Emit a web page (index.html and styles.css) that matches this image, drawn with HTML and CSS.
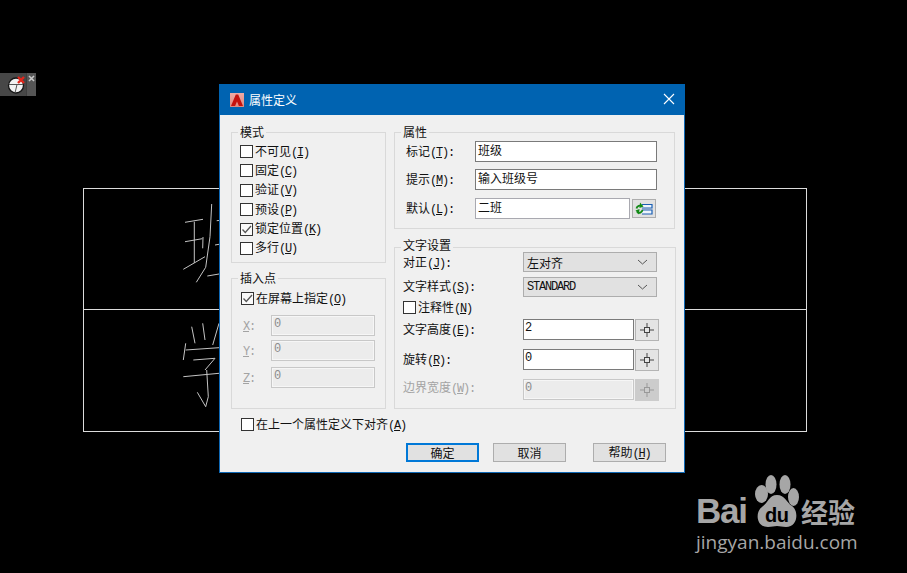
FILE: index.html
```html
<!DOCTYPE html>
<html lang="zh">
<head>
<meta charset="utf-8">
<title>属性定义</title>
<link rel="stylesheet" href="styles.css">
</head>
<body>
<main class="desktop">
  <svg class="drawing" width="907" height="573" viewBox="0 0 907 573">
    <g class="frame">
      <rect x="83.5" y="188.5" width="723" height="243"/>
      <path d="M83 309.5H806"/>
    </g>
    <g class="sketch">
      <path d="M185 222.3L203 219.3M185 241.7L202.3 238.7M194.3 221.7V263M183.3 269.3L205 256.7M211.7 204L210 236.7L205.7 267.3L196.3 282.3M202.7 248.3L203 237M216.7 220.7L219 220.5M215 245L219 244.3M207.3 276L219 274"/>
      <path d="M191.7 326.7L195 343.3M202.7 323.3L205 340M219 323.3L212.7 345M185.7 343.3L183.3 360M185.7 350L219 347.7M193.3 360L215 358.3L205 370M183.3 376.7L219 373.3M206.7 370L208.3 396.7L205.7 406.7L197.3 392.3"/>
    </g>
  </svg>

  <div class="snap-tool">
    <svg class="snap-icon" width="26" height="23" viewBox="0 0 26 23">
      <circle cx="16" cy="12.5" r="7.5" fill="#f2f2f2" stroke="#161616" stroke-width="1.3"/>
      <path d="M9 11.5H23M17 11.5L15 20" fill="none" stroke="#555" stroke-width="1"/>
      <path d="M18 4L24 10M24 4L18 10" stroke="#e3261b" stroke-width="2.4"/>
    </svg>
    <div class="snap-close"><svg width="7" height="7" viewBox="0 0 7 7"><path d="M1 1L6 6M6 1L1 6" stroke="#c8c8c8" stroke-width="1.6"/></svg></div>
  </div>

  <section class="dialog">
    <header class="titlebar">
      <svg class="app-icon" width="14" height="14" viewBox="0 0 14 14">
        <defs><linearGradient id="appbg" x1="0" y1="0" x2="0" y2="1"><stop offset="0" stop-color="#f0aaa4"/><stop offset="1" stop-color="#dc8880"/></linearGradient></defs>
        <rect width="14" height="14" fill="url(#appbg)"/>
        <path d="M1 13L5.8 1.5H8.2L13 13H8.9L7 8.6L5.1 13Z" fill="#c4120e"/>
      </svg>
      <h1 class="title">属性定义</h1>
      <svg class="close" width="12" height="12" viewBox="0 0 12 12"><path d="M1 1L11 11M11 1L1 11" stroke="#fff" stroke-width="1.1"/></svg>
    </header>

    <div class="body">
      <div class="columns">
        <div class="col-left">
          <div class="group group-mode">
            <span class="legend">模式</span>
            <div class="check-list">
              <div class="check"><span class="box"></span><span>不可见<span class="k">(<u>I</u>)</span></span></div>
              <div class="check"><span class="box"></span><span>固定<span class="k">(<u>C</u>)</span></span></div>
              <div class="check"><span class="box"></span><span>验证<span class="k">(<u>V</u>)</span></span></div>
              <div class="check"><span class="box"></span><span>预设<span class="k">(<u>P</u>)</span></span></div>
              <div class="check"><span class="box box-on"><svg width="11" height="11" viewBox="0 0 11 11"><path d="M1.5 5.5L4.3 8.5L10 2" fill="none" stroke="#555" stroke-width="1.3"/></svg></span><span>锁定位置<span class="k">(<u>K</u>)</span></span></div>
              <div class="check"><span class="box"></span><span>多行<span class="k">(<u>U</u>)</span></span></div>
            </div>
          </div>

          <div class="group group-point">
            <span class="legend">插入点</span>
            <div class="check"><span class="box box-on"><svg width="11" height="11" viewBox="0 0 11 11"><path d="M1.5 5.5L4.3 8.5L10 2" fill="none" stroke="#555" stroke-width="1.3"/></svg></span><span>在屏幕上指定<span class="k">(<u>O</u>)</span></span></div>
            <div class="coord coord-x"><span class="coord-label k"><u>X</u>:</span><div class="field field-off">0</div></div>
            <div class="coord coord-y"><span class="coord-label k"><u>Y</u>:</span><div class="field field-off">0</div></div>
            <div class="coord coord-z"><span class="coord-label k"><u>Z</u>:</span><div class="field field-off">0</div></div>
          </div>
        </div>

        <div class="col-right">
          <div class="group group-attr">
            <span class="legend">属性</span>
            <div class="attr-row"><span class="attr-label">标记<span class="k">(<u>T</u>):</span></span><div class="field field-wide">班级</div></div>
            <div class="attr-row attr-row-2"><span class="attr-label">提示<span class="k">(<u>M</u>):</span></span><div class="field field-wide">输入班级号</div></div>
            <div class="attr-row attr-row-3"><span class="attr-label">默认<span class="k">(<u>L</u>):</span></span><div class="field field-default">二班</div>
              <button class="field-btn" type="button" aria-label="插入字段">
                <svg width="18" height="14" viewBox="0 0 18 14">
                  <path d="M7 2.5H17V6H7M7 8H17V12H7" fill="#eef4fb" stroke="#1a5fb4" stroke-width="1.2"/>
                  <path d="M1.5 6.5A3.4 3.4 0 0 1 7 4.5M7.5 8A3.4 3.4 0 0 1 2 10" fill="none" stroke="#128a16" stroke-width="1.8"/>
                  <path d="M5 0.5L8.5 4.5L4.5 6ZM4 12.5L.5 8.5L4.5 7Z" fill="#128a16"/>
                </svg>
              </button>
            </div>
          </div>

          <div class="group group-text">
            <span class="legend legend-text">文字设置</span>
            <div class="text-row text-row-sel"><span class="text-label text-label-first">对正<span class="k">(<u>J</u>):</span></span>
              <div class="select"><span>左对齐</span><svg width="11" height="6" viewBox="0 0 11 6"><path d="M1 1L5.5 5L10 1" fill="none" stroke="#555" stroke-width="1"/></svg></div></div>
            <div class="text-row text-row-sel text-row-style"><span class="text-label">文字样式<span class="k">(<u>S</u>):</span></span>
              <div class="select"><span class="k">STANDARD</span><svg width="11" height="6" viewBox="0 0 11 6"><path d="M1 1L5.5 5L10 1" fill="none" stroke="#555" stroke-width="1"/></svg></div></div>
            <div class="check check-anno"><span class="box"></span><span>注释性<span class="k">(<u>N</u>)</span></span></div>
            <div class="text-row text-row-h"><span class="text-label">文字高度<span class="k">(<u>E</u>):</span></span><div class="field field-num k">2</div>
              <button class="pick" type="button" aria-label="拾取"><svg width="14" height="14" viewBox="0 0 14 14"><path d="M7 0V4.5M7 9.5V14M0 7H4.5M9.5 7H14" stroke="#444"/><rect x="4.5" y="4.5" width="5" height="5" fill="none" stroke="#444"/></svg></button></div>
            <div class="text-row text-row-n"><span class="text-label">旋转<span class="k">(<u>R</u>):</span></span><div class="field field-num k">0</div>
              <button class="pick" type="button" aria-label="拾取"><svg width="14" height="14" viewBox="0 0 14 14"><path d="M7 0V4.5M7 9.5V14M0 7H4.5M9.5 7H14" stroke="#444"/><rect x="4.5" y="4.5" width="5" height="5" fill="none" stroke="#444"/></svg></button></div>
            <div class="text-row text-row-n"><span class="text-label text-off">边界宽度<span class="k">(<u>W</u>):</span></span><div class="field field-num field-off k">0</div>
              <button class="pick pick-off" type="button" aria-label="拾取"><svg width="14" height="14" viewBox="0 0 14 14"><path d="M7 0V4.5M7 9.5V14M0 7H4.5M9.5 7H14" stroke="#999"/><rect x="4.5" y="4.5" width="5" height="5" fill="none" stroke="#999"/></svg></button></div>
          </div>
        </div>
      </div>

      <div class="check check-align"><span class="box"></span><span>在上一个属性定义下对齐<span class="k">(<u>A</u>)</span></span></div>

      <footer class="actions">
        <button class="btn btn-ok" type="button">确定</button>
        <button class="btn btn-cancel" type="button">取消</button>
        <button class="btn btn-help" type="button">帮助<span class="k">(<u>H</u>)</span></button>
      </footer>
    </div>
  </section>

  <aside class="watermark">
    <div class="wm-top">
      <span class="wm-bai">Bai</span>
      <div class="wm-paw">
        <svg width="44" height="52" viewBox="0 0 44 52">
          <ellipse cx="6.5" cy="19" rx="6.5" ry="9" fill="#a6a6a6"/>
          <ellipse cx="16" cy="9.5" rx="5.5" ry="9.5" fill="#a6a6a6"/>
          <ellipse cx="30" cy="9.5" rx="5.5" ry="9.5" fill="#a6a6a6"/>
          <ellipse cx="38.5" cy="22" rx="5.5" ry="9" fill="#a6a6a6"/>
          <path d="M22 20C30 20 31 27 37 31C44 36 43 52 31 52C27 52 25 51 22 51C19 51 17 52 13 52C1 52 0 37 7 32C13 28 14 20 22 20Z" fill="#a6a6a6"/>
        </svg>
        <span class="wm-du">du</span>
      </div>
      <span class="wm-cn">经验</span>
    </div>
    <div class="wm-url">jingyan.baidu.com</div>
  </aside>
</main>
</body>
</html>
```

FILE: styles.css
```css
* { box-sizing: border-box; }

html, body {
  margin: 0;
  padding: 0;
  background: #000;
}

.desktop {
  position: relative;
  width: 907px;
  height: 573px;
  overflow: hidden;
  background: #000;
  font: 12px/13px "Noto Sans CJK SC", "Liberation Sans", sans-serif;
  color: #111;
}

/* CAD canvas */
.drawing { position: absolute; left: 0; top: 0; }
.frame { fill: none; stroke: #dcdcdc; stroke-width: 1; }
.sketch { fill: none; stroke: #c4c4c4; stroke-width: 1; }

.snap-tool {
  position: absolute;
  left: 0;
  top: 73px;
  width: 36px;
  height: 23px;
  display: flex;
  background: #474747;
}
.snap-icon { flex: none; }
.snap-close {
  flex: 1;
  background: #555;
  border-left: 1px solid #3e3e3e;
  padding: 2px 0 0 1px;
  line-height: 0;
}

/* Dialog */
.dialog {
  position: absolute;
  left: 219px;
  top: 84px;
  width: 466px;
  height: 389px;
  display: flex;
  flex-direction: column;
  background: #f0f0f0;
  border: 1px solid #0f68b4;
  border-top: 0;
}
.titlebar {
  flex: none;
  height: 31px;
  margin: 0 -1px;
  display: flex;
  align-items: center;
  padding: 0 10px 0 11px;
  background: #0063b1;
  color: #fff;
}
.app-icon { flex: none; }
.title {
  margin: 0 0 0 5px;
  font-size: 12px;
  font-weight: 400;
  flex: 1;
}
.close { flex: none; margin-top: -1px; }

.body { flex: 1; padding: 17px 0 0 11px; }
.columns { display: flex; gap: 8px; align-items: flex-start; }
.col-left { width: 155px; }
.col-right { width: 282px; }

.group {
  position: relative;
  border: 1px solid #d9d9d9;
}
.legend {
  position: absolute;
  top: -7px;
  left: 6px;
  padding: 0 2px;
  background: #f0f0f0;
  font-size: 12px;
  line-height: 12px;
}
.legend-text { top: -9px; }

.group-mode { height: 131px; padding: 12px 0 0 8px; }
.group-point { height: 131px; margin-top: 15px; padding: 13px 0 0 9px; }
.group-attr { width: 281px; height: 97px; padding: 8px 0 0 11px; }
.group-text { height: 162px; margin-top: 18px; padding: 4px 0 0 8px; }

.check-list {
  display: grid;
  grid-auto-rows: 13px;
  row-gap: 6.4px;
}
.check {
  display: flex;
  align-items: center;
  gap: 2px;
  height: 13px;
  white-space: nowrap;
}
.box {
  flex: none;
  width: 13px;
  height: 13px;
  background: #fff;
  border: 1px solid #333;
  display: flex;
  align-items: center;
  justify-content: center;
}
.box-on { background: #fafafa; }

/* half-width latin: 12px glyphs on a 6px advance */
.k {
  font-family: "Liberation Mono", monospace;
  font-size: 12px;
  letter-spacing: -1.2px;
}

.coord {
  display: flex;
  align-items: center;
  height: 21px;
  color: #a3a3a3;
}
.coord-x { margin-top: 10px; }
.coord-y { margin-top: 4px; }
.coord-z { margin-top: 6px; }
.coord-label { width: 30px; padding: 3px 0 0 2px; }

.field {
  height: 21px;
  padding: 0 2px;
  background: #fff;
  border: 1px solid #7a7a7a;
  line-height: 16px;
  white-space: nowrap;
}
.field-off {
  width: 104px;
  background: #ececec;
  border-color: #c8c8c8;
  box-shadow: inset 0 0 0 1px #f6f6f6;
  color: #8c8c8c;
  font-family: "Liberation Mono", monospace;
  font-size: 12px;
}
.field-wide { width: 182px; }
.field-default { width: 155px; border-color: #a9a9b0; }
.field-num { width: 111px; padding-left: 1px; line-height: 17px; }

.attr-row { display: flex; align-items: center; height: 21px; }
.attr-row-2 { margin-top: 7px; }
.attr-row-3 { margin-top: 8px; }
.attr-label { width: 69px; flex: none; white-space: nowrap; }

.field-btn {
  width: 24px;
  height: 19px;
  margin-left: 2px;
  padding: 0;
  background: #e1e1e1;
  border: 1px solid #adadad;
  display: flex;
  align-items: center;
  justify-content: center;
}

.text-row { display: flex; align-items: center; height: 21px; }
.text-row-sel { height: 20px; }
.text-row-style { margin-top: 5px; }
.text-row-h { margin-top: 5px; }
.text-row-n { margin-top: 9px; }
.text-label { width: 120px; flex: none; white-space: nowrap; }
.text-label-first { margin-top: 2px; }
.text-off { color: #a3a3a3; margin-top: -4px; }
.check-anno { margin-top: 4px; }

.select {
  width: 134px;
  height: 20px;
  display: flex;
  align-items: center;
  justify-content: space-between;
  padding: 0 8px 0 3px;
  background: #e1e1e1;
  border: 1px solid #adadad;
}

.pick {
  width: 24px;
  height: 22px;
  margin-left: 1px;
  padding: 0;
  background: #e4e4e4;
  border: 1px solid #b4b4b4;
  display: flex;
  align-items: center;
  justify-content: center;
}
.pick-off { background: #cccccc; border-color: #cccccc; }

.check-align { margin: 9px 0 0 10px; }

.actions {
  display: flex;
  margin: 12px 0 0 175px;
}
.btn {
  width: 73px;
  height: 19px;
  padding: 0;
  background: #e1e1e1;
  border: 1px solid #adadad;
  font: inherit;
  line-height: 15px;
  color: #111;
}
.btn-ok { border: 2px solid #0078d7; }
.btn-cancel { margin-left: 14px; }
.btn-help { margin-left: 27px; }

/* Watermark */
.watermark {
  position: absolute;
  left: 696px;
  top: 475px;
  width: 165px;
  color: #a6a6a6;
}
.wm-top { display: flex; align-items: flex-end; height: 53px; }
.wm-bai {
  font: 700 35px/34px "Liberation Sans", sans-serif;
  letter-spacing: -1.2px;
  width: 59px;
}
.wm-paw { position: relative; width: 44px; height: 53px; }
.wm-du {
  position: absolute;
  left: 10px;
  top: 30px;
  color: #000;
  font: 700 20px/20px "Liberation Sans", sans-serif;
  letter-spacing: -0.5px;
}
.wm-cn {
  font: 700 27px/32px "Noto Sans CJK SC", sans-serif;
  width: 56px;
  margin-left: 2px;
  white-space: nowrap;
}
.wm-url {
  margin-top: 2px;
  font: 400 19px/24px "Open Sans", sans-serif;
  white-space: nowrap;
}
```
